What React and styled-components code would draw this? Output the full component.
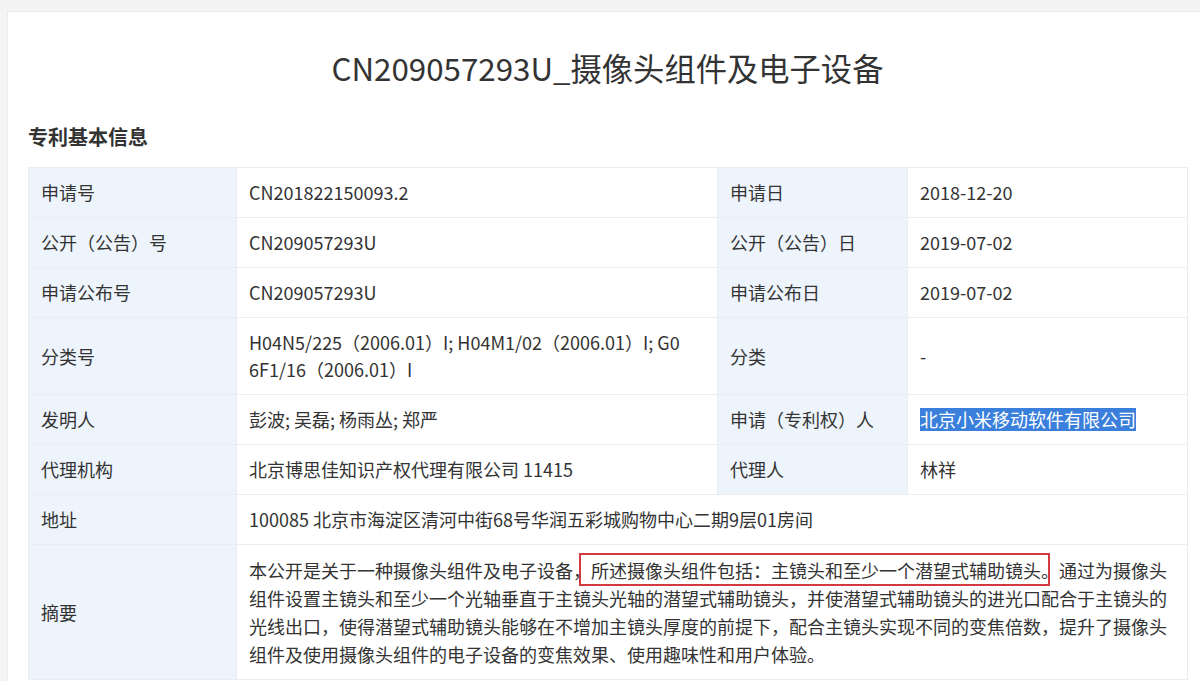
import React from "react";
import styled, { createGlobalStyle } from "styled-components";

const Global = createGlobalStyle`
  html, body { margin: 0; padding: 0; overflow: hidden; background: #f4f4f4; }
  body { font-family: "Noto Sans CJK SC", "Noto Sans", sans-serif; color: #333; }
`;

const Page = styled.div`
  padding: 11px 0 0 7px;
  height: 681px;
  box-sizing: border-box;
`;

const Card = styled.div`
  width: 1201px;
  background: #fff;
  border-top: 1px solid #ebebeb;
  border-left: 1px solid #ebebeb;
  padding: 34px 20px 0 20px;
  box-sizing: border-box;
  min-height: 670px;
`;

const Title = styled.h1`
  margin: 0;
  font-size: 31.3px;
  font-weight: 400;
  line-height: 44px;
  text-align: center;
  color: #333;
  width: 1159px;
`;

const Section = styled.h2`
  margin: 33px 0 16px 0;
  font-size: 20px;
  font-weight: 700;
  line-height: 28px;
  color: #333;
`;

const Table = styled.table`
  width: 1159px;
  border-collapse: collapse;
  table-layout: fixed;
  font-size: 18px;
  color: #333;
`;

const Cell = styled.td`
  border: 1px solid #e9edf1;
  padding: 11px 12px;
  line-height: ${(p) => (p.$loose ? "28px" : "27px")};
  vertical-align: middle;
  word-break: break-all;
  background: ${(p) => (p.$label ? "#eef4fb" : "#fff")};
`;

const Selected = styled.span`
  background: #3a7fdc;
  color: #fff;
  display: inline-block;
  line-height: 23px;
`;

const Marked = styled.span`
  position: relative;
  &::after {
    content: "";
    position: absolute;
    left: -12px;
    right: 9px;
    top: -4px;
    bottom: -3px;
    border: 2px solid #d33a40;
    pointer-events: none;
  }
`;

const rows = [
  ["申请号", "CN201822150093.2", "申请日", "2018-12-20"],
  ["公开（公告）号", "CN209057293U", "公开（公告）日", "2019-07-02"],
  ["申请公布号", "CN209057293U", "申请公布日", "2019-07-02"],
  [
    "分类号",
    <React.Fragment key="c">
      H04N5/225（2006.01）I; H04M1/02（2006.01）I; G0
      <br />
      6F1/16（2006.01）I
    </React.Fragment>,
    "分类",
    "-",
  ],
  ["发明人", "彭波; 吴磊; 杨雨丛; 郑严", "申请（专利权）人", <Selected key="s">北京小米移动软件有限公司</Selected>],
  ["代理机构", "北京博思佳知识产权代理有限公司 11415", "代理人", "林祥"],
];

export default function App() {
  return (
    <>
      <Global />
      <Page>
        <Card>
          <Title>CN209057293U_摄像头组件及电子设备</Title>
          <Section>专利基本信息</Section>
          <Table>
            <colgroup>
              <col style={{ width: 208 }} />
              <col style={{ width: 481 }} />
              <col style={{ width: 190 }} />
              <col style={{ width: 280 }} />
            </colgroup>
            <tbody>
              {rows.map((r, i) => (
                <tr key={i}>
                  <Cell $label>{r[0]}</Cell>
                  <Cell>{r[1]}</Cell>
                  <Cell $label>{r[2]}</Cell>
                  <Cell>{r[3]}</Cell>
                </tr>
              ))}
              <tr>
                <Cell $label>地址</Cell>
                <Cell colSpan={3}>100085 北京市海淀区清河中街68号华润五彩城购物中心二期9层01房间</Cell>
              </tr>
              <tr>
                <Cell $label>摘要</Cell>
                <Cell colSpan={3} $loose>
                  <span>本公开是关于一种摄像头组件及电子设备，</span>
                  <Marked>所述摄像头组件包括：主镜头和至少一个潜望式辅助镜头。</Marked>
                  <span>通过为摄像头组件设置主镜头和至少一个光轴垂直于主镜头光轴的潜望式辅助镜头，并使潜望式辅助镜头的进光口配合于主镜头的光线出口，使得潜望式辅助镜头能够在不增加主镜头厚度的前提下，配合主镜头实现不同的变焦倍数，提升了摄像头组件及使用摄像头组件的电子设备的变焦效果、使用趣味性和用户体验。</span>
                </Cell>
              </tr>
            </tbody>
          </Table>
        </Card>
      </Page>
    </>
  );
}
